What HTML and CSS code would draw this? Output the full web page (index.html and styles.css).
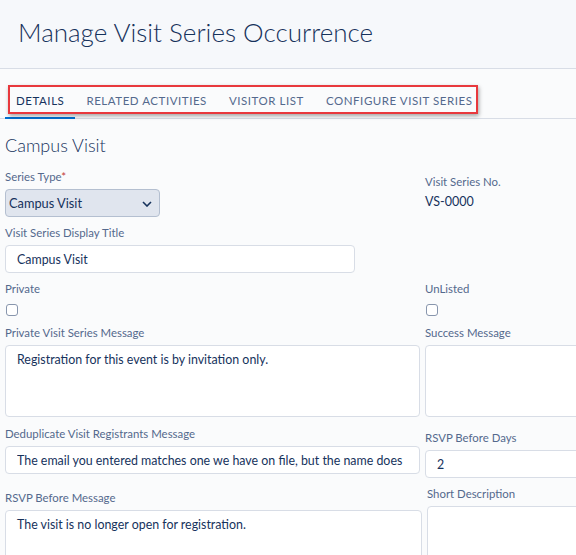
FILE: index.html
```html
<!DOCTYPE html>
<html lang="en">
<head>
  <meta charset="UTF-8" />
  <meta name="viewport" content="width=device-width, initial-scale=1.0"/>
  <title>Manage Visit Series Occurrence</title>
  <link rel="stylesheet" href="styles.css">
</head>
<body>

  <header class="page-header">
    <h1>Manage Visit Series Occurrence</h1>
  </header>

  <!-- Tabs -->
  <nav class="tabs">
    <a class="tab active" href="#">Details</a>
    <a class="tab" href="#">Related Activities</a>
    <a class="tab" href="#">Visitor List</a>
    <a class="tab" href="#">Configure Visit Series</a>
    <div class="tabs-mark"></div>
  </nav>

  <main class="content">
    <h2>Campus Visit</h2>

    <div class="form-grid">
      <!-- row 1 -->
      <div class="field">
        <label class="field-label">Series Type<span class="req">*</span></label>
        <div class="select-wrap">
          <select class="select">
            <option>Campus Visit</option>
          </select>
          <svg class="chevron" width="10" height="6" viewBox="0 0 10 6"><path d="M1 1 L5 5 L9 1" fill="none" stroke="#16325c" stroke-width="1.6"/></svg>
        </div>
      </div>
      <div class="field field-shift5">
        <label class="field-label">Visit Series No.</label>
        <div class="value">VS-0000</div>
      </div>

      <!-- row 2 -->
      <div class="field">
        <label class="field-label">Visit Series Display Title</label>
        <input class="input input-title" type="text" value="Campus Visit">
      </div>
      <div></div>

      <!-- row 3 -->
      <div class="field">
        <label class="field-label">Private</label>
        <input class="check" type="checkbox">
      </div>
      <div class="field">
        <label class="field-label">UnListed</label>
        <input class="check" type="checkbox">
      </div>

      <!-- row 4 -->
      <div class="field field-gap">
        <label class="field-label">Private Visit Series Message</label>
        <textarea class="textarea">Registration for this event is by invitation only.</textarea>
      </div>
      <div class="field field-gap">
        <label class="field-label">Success Message</label>
        <textarea class="textarea"></textarea>
      </div>

      <!-- row 5 -->
      <div class="field field-gap">
        <label class="field-label">Deduplicate Visit Registrants Message</label>
        <input class="input" type="text" value="The email you entered matches one we have on file, but the name does">
      </div>
      <div class="field field-shift5">
        <label class="field-label">RSVP Before Days</label>
        <input class="input" type="text" value="2">
      </div>

      <!-- row 6 -->
      <div class="field field-shift4">
        <label class="field-label">RSVP Before Message</label>
        <textarea class="textarea textarea-wide">The visit is no longer open for registration.</textarea>
      </div>
      <div class="field field-nudge">
        <label class="field-label">Short Description</label>
        <textarea class="textarea"></textarea>
      </div>
    </div>
  </main>

</body>
</html>
```

FILE: styles.css
```css
body {
  margin: 0;
  font-family: Lato, 'Open Sans', sans-serif;
  background-color: #fafbfc;
  color: #16325c;
  overflow: hidden;
}

.page-header {
  box-sizing: border-box;
  height: 69px;
  background-color: #f6f8fb;
  border-bottom: 1px solid #d8dde6;
  padding: 0 0 4px 18px;
  display: flex;
  align-items: center;
}
.page-header h1 {
  margin: 0;
  font-size: 26px;
  font-weight: 300;
  color: #16325c;
}

/* Tabs */
.tabs {
  position: relative;
  display: flex;
  margin-top: 18px;
  padding-left: 5px;
  border-bottom: 1px solid #d8dde6;
}
.tab {
  padding: 7px 11px 10px;
  font-size: 11.5px;
  letter-spacing: 0.55px;
  text-transform: uppercase;
  text-decoration: none;
  color: #54698d;
  border-bottom: 2px solid transparent;
  margin-bottom: -1px;
}
.tab.active {
  color: #16325c;
  border-bottom-color: #0070d2;
}

/* red highlight round the tab labels */
.tabs-mark {
  position: absolute;
  left: 8px;
  top: -2px;
  width: 466px;
  height: 25px;
  border: 2px solid #e8383d;
  box-shadow: 1px 2px 4px rgba(0,0,0,0.35);
}

.content {
  padding: 0 5px;
}
.content h2 {
  margin: 15px 0 12px;
  font-size: 18px;
  font-weight: 300;
  line-height: 22px;
}

.form-grid {
  display: grid;
  grid-template-columns: 415px 300px;
  column-gap: 5px;
  row-gap: 7px;
  align-items: start;
}

.field {
  display: flex;
  flex-direction: column;
  align-items: flex-start;
}
.field-shift5 {
  margin-top: 5px;
}
.field-shift4 {
  margin-top: 4px;
}
.field-gap {
  margin-top: 1px;
}
.field-nudge {
  padding-left: 2px;
}

.field-label {
  font-size: 11.4px;
  line-height: 18px;
  color: #54698d;
  margin-bottom: 3px;
}
.req {
  color: #c23934;
}

.value {
  font-size: 12.5px;
  line-height: 18px;
  color: #16325c;
  margin-top: -1px;
}

.select-wrap {
  position: relative;
}
.select {
  appearance: none;
  width: 155px;
  height: 28px;
  padding: 0 24px 0 3px;
  font-family: inherit;
  font-size: 12.8px;
  color: #16325c;
  background: #e0e5ee;
  border: 1px solid #b4bfd0;
  border-radius: 4px;
}
.chevron {
  position: absolute;
  right: 8px;
  top: 12px;
}

.input {
  box-sizing: border-box;
  width: 100%;
  height: 28px;
  padding: 0 11px;
  font-family: inherit;
  font-size: 12.4px;
  color: #16325c;
  background: #ffffff;
  border: 1px solid #d8dde6;
  border-radius: 4px;
}
.input-title {
  width: 350px;
}

.textarea {
  box-sizing: border-box;
  width: 100%;
  height: 72px;
  padding: 6px 11px;
  font-family: inherit;
  font-size: 12.4px;
  color: #16325c;
  background: #ffffff;
  border: 1px solid #d8dde6;
  border-radius: 4px;
  resize: none;
}
.textarea-wide {
  width: 417px;
}

.check {
  appearance: none;
  width: 12px;
  height: 12px;
  margin: 3px 0 0 1px;
  border: 1px solid #8896ad;
  border-radius: 3px;
  background: #ffffff;
}
```
